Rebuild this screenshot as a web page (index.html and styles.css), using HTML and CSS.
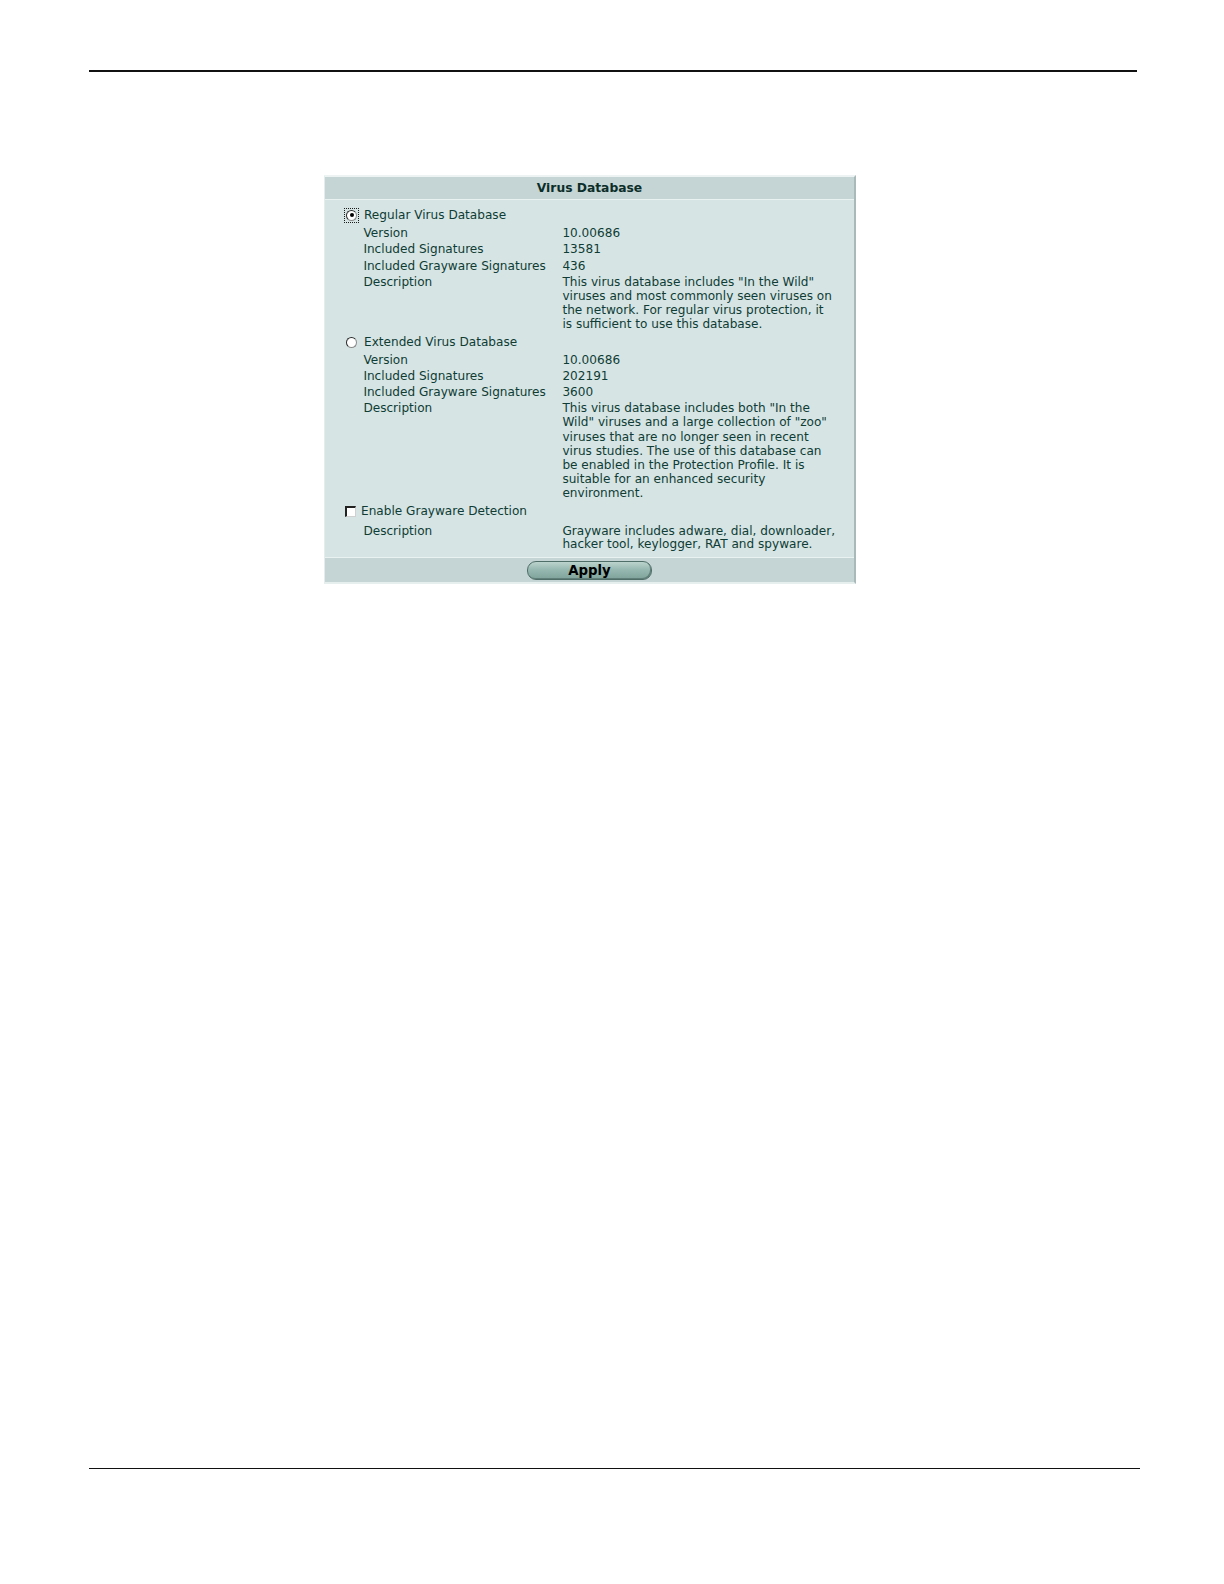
FILE: index.html
```html
<!DOCTYPE html>
<html>
<head>
<meta charset="utf-8">
<link rel="stylesheet" href="styles.css">
</head>
<body>
<div class="page">
  <div class="rule-top"></div>
  <div class="panel">
    <div class="head">Virus Database</div>
    <div class="body">
      <div class="opt"><span class="focus"><span class="radio"><span class="dot"></span></span></span><span class="opt-label">Regular Virus Database</span></div>
      <div class="grid">
        <div>Version</div><div>10.00686</div>
        <div>Included Signatures</div><div>13581</div>
        <div>Included Grayware Signatures</div><div>436</div>
        <div class="dl">Description</div>
        <div class="desc">This virus database includes "In the Wild"<br>viruses and most commonly seen viruses on<br>the network. For regular virus protection, it<br>is sufficient to use this database.</div>
      </div>
      <div class="opt opt2"><span class="nofocus"><span class="radio"></span></span><span class="opt-label">Extended Virus Database</span></div>
      <div class="grid grid2">
        <div>Version</div><div>10.00686</div>
        <div>Included Signatures</div><div>202191</div>
        <div>Included Grayware Signatures</div><div>3600</div>
        <div class="dl">Description</div>
        <div class="desc">This virus database includes both "In the<br>Wild" viruses and a large collection of "zoo"<br>viruses that are no longer seen in recent<br>virus studies. The use of this database can<br>be enabled in the Protection Profile. It is<br>suitable for an enhanced security<br>environment.</div>
      </div>
      <div class="opt opt3"><span class="check"></span><span class="opt-label">Enable Grayware Detection</span></div>
      <div class="grid grid3">
        <div class="dl">Description</div>
        <div class="desc desc3">Grayware includes adware, dial, downloader,<br>hacker tool, keylogger, RAT and spyware.</div>
      </div>
    </div>
    <div class="foot"><span class="btn">Apply</span></div>
  </div>
  <div class="rule-bottom"></div>
</div>
</body>
</html>
```
FILE: styles.css
```css
html, body {
  margin: 0;
  padding: 0;
  background: #ffffff;
}
.page {
  padding: 70px 0 0 89px;
  font-family: "DejaVu Sans", Verdana, sans-serif;
}
.rule-top {
  width: 1048px;
  height: 1.5px;
  background: #111;
}
.rule-bottom {
  width: 1051px;
  height: 1px;
  background: #111;
  margin-top: 884px;
}
.panel {
  margin: 103px 0 0 235px;
  width: 529px;
  background: #d6e4e4;
  border-top: 2px solid #edf3f3;
  border-left: 1px solid #e4ecec;
  border-right: 2px solid #a9b8b8;
  border-bottom: 2px solid #e6eeee;
  color: #0f3c35;
  font-size: 12.1px;
}
.head {
  height: 22px;
  line-height: 22px;
  background: #c5d4d4;
  text-align: center;
  font-weight: bold;
  font-size: 12.3px;
  color: #0b2e29;
  border-bottom: 1px solid #eaf1f1;
}
.body {
  padding: 7.5px 0 5.5px 20px;
}
.opt {
  display: flex;
  align-items: center;
  height: 16.2px;
  line-height: 16.2px;
}
.opt2 { margin-top: 3px; }
.opt3 { margin-top: 3px; }
.opt-label {
  margin-left: 5px;
}
.opt3 .opt-label { margin-left: 5px; }
.focus, .nofocus {
  display: inline-flex;
  padding: 1px;
  border: 1px dotted #1a1a1a;
  margin-left: -1px;
}
.nofocus { border-color: transparent; }
.radio {
  position: relative;
  width: 9px;
  height: 9px;
  border-radius: 50%;
  background: #fff;
  border: 1px solid #8a8a8a;
  border-top-color: #2a2a2a;
  border-left-color: #2a2a2a;
  box-sizing: content-box;
  display: inline-block;
}
.dot {
  position: absolute;
  left: 2.5px;
  top: 2.5px;
  width: 4px;
  height: 4px;
  border-radius: 50%;
  background: #000;
}
.check {
  display: inline-block;
  width: 8px;
  height: 8px;
  background: #fff;
  border: 1px solid #d0d0d0;
  border-top: 2px solid #222;
  border-left: 2px solid #222;
}
.grid {
  display: grid;
  grid-template-columns: 199px auto;
  margin-left: 18.4px;
  margin-top: 2px;
  line-height: 16.2px;
}
.grid2 { margin-top: 1px; }
.grid3 { margin-top: 5.5px; }
.desc {
  line-height: 14.15px;
  padding-top: 1px;
  white-space: nowrap;
}
.dl {
  padding-top: 1px;
  line-height: 14.15px;
}
.desc3 {
  line-height: 13.2px;
  padding-top: 0;
}
.grid3 .dl { padding-top: 0; line-height: 13.2px; }
.foot {
  background: #c5d4d4;
  border-top: 1px solid #eaf1f1;
  height: 24.3px;
  display: flex;
  justify-content: center;
  align-items: center;
}
.btn {
  display: inline-block;
  width: 123px;
  height: 17px;
  line-height: 17px;
  text-align: center;
  border-radius: 9px;
  border: 1px solid #4f6e68;
  background: linear-gradient(#bcd3cd 0%, #96b8b0 45%, #7fa39a 100%);
  font-weight: bold;
  font-size: 13.3px;
  color: #000;
  box-shadow: inset -1px -1px 0 #5f7f78;
}
```
